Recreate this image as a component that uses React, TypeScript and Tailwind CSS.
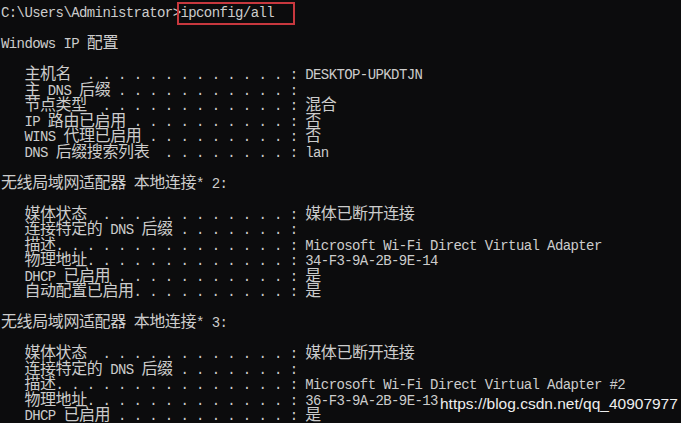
const isWide = (ch: string) => /[\u2E80-\u9FFF\uFF00-\uFFEF]/.test(ch);

const width = (s: string) => [...s].reduce((n, ch) => n + (isWide(ch) ? 2 : 1), 0);

// ipconfig style row: label, dots from an odd column up to the colon at col 37
const row = (label: string, dotStart: number, value = "") => {
  let s = "   " + label;
  s += " ".repeat(Math.max(0, dotStart - width(s)));
  for (let c = dotStart; c < 37; c += 2) s += ". ";
  return s + ":" + (value ? " " + value : "");
};

const adapter = (n: number, desc: string, mac: string, withAuto: boolean) => [
  `无线局域网适配器 本地连接* ${n}:`,
  "",
  row("媒体状态", 13, "媒体已断开连接"),
  row("连接特定的 DNS 后缀", 23),
  row("描述", 7, desc),
  row("物理地址", 11, mac),
  row("DHCP 已启用", 15, "是"),
  ...(withAuto ? [row("自动配置已启用", 17, "是")] : []),
];

const lines: string[] = [
  "C:\\Users\\Administrator>ipconfig/all",
  "",
  "Windows IP 配置",
  "",
  row("主机名", 11, "DESKTOP-UPKDTJN"),
  row("主 DNS 后缀", 15),
  row("节点类型", 13, "混合"),
  row("IP 路由已启用", 17, "否"),
  row("WINS 代理已启用", 19, "否"),
  row("DNS 后缀搜索列表", 21, "lan"),
  "",
  ...adapter(2, "Microsoft Wi-Fi Direct Virtual Adapter", "34-F3-9A-2B-9E-14", true),
  "",
  ...adapter(3, "Microsoft Wi-Fi Direct Virtual Adapter #2", "36-F3-9A-2B-9E-13", false),
];

function Line({ text }: { text: string }) {
  const parts = text.split(/([\u2E80-\u9FFF\uFF00-\uFFEF]+)/).filter(Boolean);
  return (
    <div className="h-[15.5px] leading-[15.5px] whitespace-pre">
      {parts.map((p, i) =>
        isWide(p[0]) ? (
          <span key={i} className="text-[16px] tracking-[-0.4px]">
            {p}
          </span>
        ) : (
          <span key={i}>{p}</span>
        )
      )}
    </div>
  );
}

export default function App() {
  return (
    <div className="flex w-[692px] h-[423px] bg-white overflow-hidden">
      <div className="relative w-[681px] h-full bg-[#0c0c0d] overflow-hidden">
        <div className="pt-[6px] pl-[1px] text-[14px] tracking-[-0.6px] text-[#cccccc] font-['Liberation_Mono','Noto_Sans_CJK_SC',monospace]">
          {lines.map((l, i) => (
            <Line key={i} text={l} />
          ))}
        </div>

        {/* red highlight round the command */}
        <div className="absolute left-[177px] top-[2px] w-[118px] h-[23px] border-2 border-[#c8383e]" />

        {/* blog watermark */}
        <div className="absolute left-[440px] top-[396px] text-[15.5px] leading-none text-[#eeeeee] font-['Liberation_Sans',Arial,sans-serif] whitespace-nowrap">
          https://blog.csdn.net/qq_40907977
        </div>
      </div>
    </div>
  );
}
